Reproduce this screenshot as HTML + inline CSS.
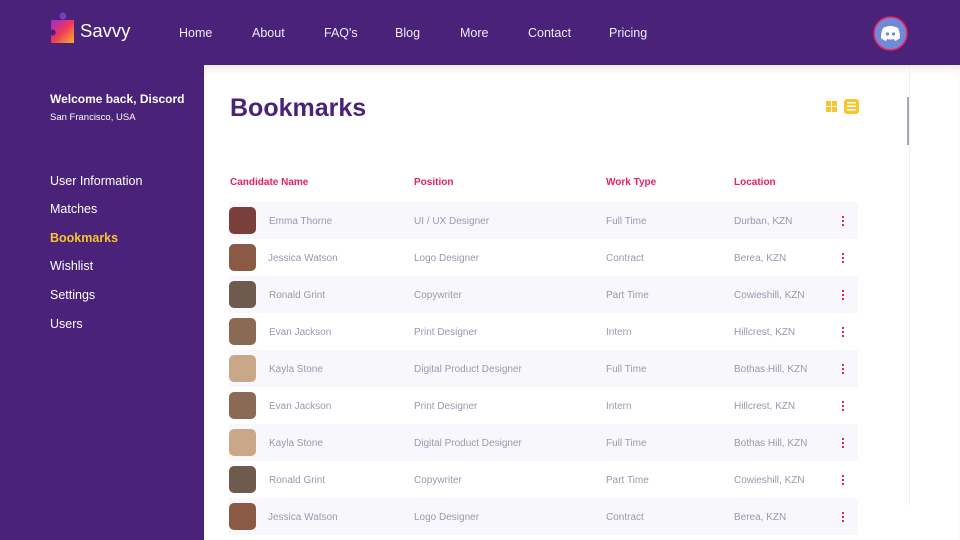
<!DOCTYPE html>
<html><head><meta charset="utf-8"><style>
*{margin:0;padding:0;box-sizing:border-box}
body{width:960px;height:540px;overflow:hidden;background:#fff;font-family:"Liberation Sans",sans-serif;position:relative}
.top{position:absolute;left:0;top:0;width:960px;height:65px;background:#4a2279}
.logo{position:absolute;left:50px;top:12px}
.brand{position:absolute;left:80px;top:20px;color:#fff;font-size:18.5px}
.nav a{position:absolute;top:26px;color:#f0eaf8;font-size:12.5px;text-decoration:none}
.side{position:absolute;left:0;top:65px;width:204px;height:475px;background:#4a2279}
.side div{position:absolute;left:50px;color:#fff;font-size:12.5px}
.main{position:absolute;left:204px;top:65px;width:756px;height:475px;background:#fff;box-shadow:inset 0 8px 10px -6px rgba(0,0,0,.12)}
h1{position:absolute;left:230px;top:94px;color:#4a2279;font-size:25px;font-weight:bold}
.th{position:absolute;top:177px;color:#e8215e;font-size:10px;font-weight:bold}
.row{position:absolute;left:229px;width:629px;height:37px;font-size:10px;color:#9a98ad;background:#fff}
.row.s{background:#f8f8fc}
.row span{position:absolute;top:14px}
.av{position:absolute;left:0;top:5px;width:27px;height:27px;border-radius:5px}
.dots{position:absolute;left:613px;top:14px;width:2px;height:10px;background:repeating-linear-gradient(#e8215e 0 2px,transparent 2px 4px)}
</style></head><body>
<div class="top">
<svg class="logo" width="25" height="32" viewBox="0 0 25 32"><defs><linearGradient id="g" x1="0" y1="0" x2="1" y2="1"><stop offset="0" stop-color="#9b2dd6"/><stop offset=".5" stop-color="#f0385a"/><stop offset="1" stop-color="#f8b22a"/></linearGradient></defs><circle cx="13" cy="4" r="3.5" fill="#7a3bbd"/><path d="M1 8h23v23H1v-8a3 3 0 1 0 0-5z" fill="url(#g)"/></svg>
<div class="brand">Savvy</div>
<div class="nav"><a style="left:179px">Home</a><a style="left:252px">About</a><a style="left:324px">FAQ's</a><a style="left:395px">Blog</a><a style="left:460px">More</a><a style="left:528px">Contact</a><a style="left:609px">Pricing</a></div>
<svg style="position:absolute;left:873px;top:16px" width="35" height="35" viewBox="0 0 35 35"><circle cx="17.5" cy="17.5" r="16.5" fill="#7289da" stroke="#e8215e" stroke-width="1.5"/><path d="M10 12q4-2 7.5-2t7.5 2q2 4 2 10-3 2.5-5 3l-1-2q-3.5 1-7 0l-1 2q-2-.5-5-3 0-6 2-10z" fill="#fff"/><circle cx="14.5" cy="18" r="1.6" fill="#7289da"/><circle cx="20.5" cy="18" r="1.6" fill="#7289da"/></svg>
</div>
<div class="side">
<div style="top:27px;font-weight:bold;font-size:12px">Welcome back, Discord</div>
<div style="top:47px;font-size:9.5px">San Francisco, USA</div>
<div style="top:109px">User Information</div>
<div style="top:137px">Matches</div>
<div style="top:166px;color:#f8c52a;font-weight:bold">Bookmarks</div>
<div style="top:194px">Wishlist</div>
<div style="top:223px">Settings</div>
<div style="top:252px">Users</div>
</div>
<div class="main"></div>
<div style="position:absolute;left:907px;top:97px;width:2px;height:48px;background:#a9a7c0"></div>
<div style="position:absolute;left:909px;top:65px;width:1px;height:440px;background:#eee"></div>
<div style="position:absolute;left:826px;top:101px;width:11px;height:11px;background:linear-gradient(#f8c52a,#f8c52a) 0 0/5px 5px no-repeat,linear-gradient(#f8c52a,#f8c52a) 6px 0/5px 5px no-repeat,linear-gradient(#f8c52a,#f8c52a) 0 6px/5px 5px no-repeat,linear-gradient(#f8c52a,#f8c52a) 6px 6px/5px 5px no-repeat"></div>
<div style="position:absolute;left:844px;top:99px;width:15px;height:15px;background:#f8c52a;border-radius:3px;padding:3px"><div style="height:9px;background:repeating-linear-gradient(#fff 0 1.5px,transparent 1.5px 3.5px)"></div></div>
<h1>Bookmarks</h1>
<div class="th" style="left:230px">Candidate Name</div>
<div class="th" style="left:414px">Position</div>
<div class="th" style="left:606px">Work Type</div>
<div class="th" style="left:734px">Location</div>

<div class="row s" style="top:202px"><div class="av" style="background:#7a3f3a"></div><span style="left:40px">Emma Thorne</span><span style="left:185px">UI / UX Designer</span><span style="left:377px">Full Time</span><span style="left:505px">Durban, KZN</span><div class="dots"></div></div>
<div class="row" style="top:239px"><div class="av" style="background:#8a5a45"></div><span style="left:39px">Jessica Watson</span><span style="left:185px">Logo Designer</span><span style="left:377px">Contract</span><span style="left:505px">Berea, KZN</span><div class="dots"></div></div>
<div class="row s" style="top:276px"><div class="av" style="background:#6f5a4e"></div><span style="left:40px">Ronald Grint</span><span style="left:185px">Copywriter</span><span style="left:377px">Part Time</span><span style="left:505px">Cowieshill, KZN</span><div class="dots"></div></div>
<div class="row" style="top:313px"><div class="av" style="background:#8b6a55"></div><span style="left:40px">Evan Jackson</span><span style="left:185px">Print Designer</span><span style="left:377px">Intern</span><span style="left:505px">Hillcrest, KZN</span><div class="dots"></div></div>
<div class="row s" style="top:350px"><div class="av" style="background:#c9a88a"></div><span style="left:40px">Kayla Stone</span><span style="left:185px">Digital Product Designer</span><span style="left:377px">Full Time</span><span style="left:505px">Bothas Hill, KZN</span><div class="dots"></div></div>
<div class="row" style="top:387px"><div class="av" style="background:#8b6a55"></div><span style="left:40px">Evan Jackson</span><span style="left:185px">Print Designer</span><span style="left:377px">Intern</span><span style="left:505px">Hillcrest, KZN</span><div class="dots"></div></div>
<div class="row s" style="top:424px"><div class="av" style="background:#c9a88a"></div><span style="left:40px">Kayla Stone</span><span style="left:185px">Digital Product Designer</span><span style="left:377px">Full Time</span><span style="left:505px">Bothas Hill, KZN</span><div class="dots"></div></div>
<div class="row" style="top:461px"><div class="av" style="background:#6f5a4e"></div><span style="left:40px">Ronald Grint</span><span style="left:185px">Copywriter</span><span style="left:377px">Part Time</span><span style="left:505px">Cowieshill, KZN</span><div class="dots"></div></div>
<div class="row s" style="top:498px"><div class="av" style="background:#8a5a45"></div><span style="left:39px">Jessica Watson</span><span style="left:185px">Logo Designer</span><span style="left:377px">Contract</span><span style="left:505px">Berea, KZN</span><div class="dots"></div></div>
</body></html>
